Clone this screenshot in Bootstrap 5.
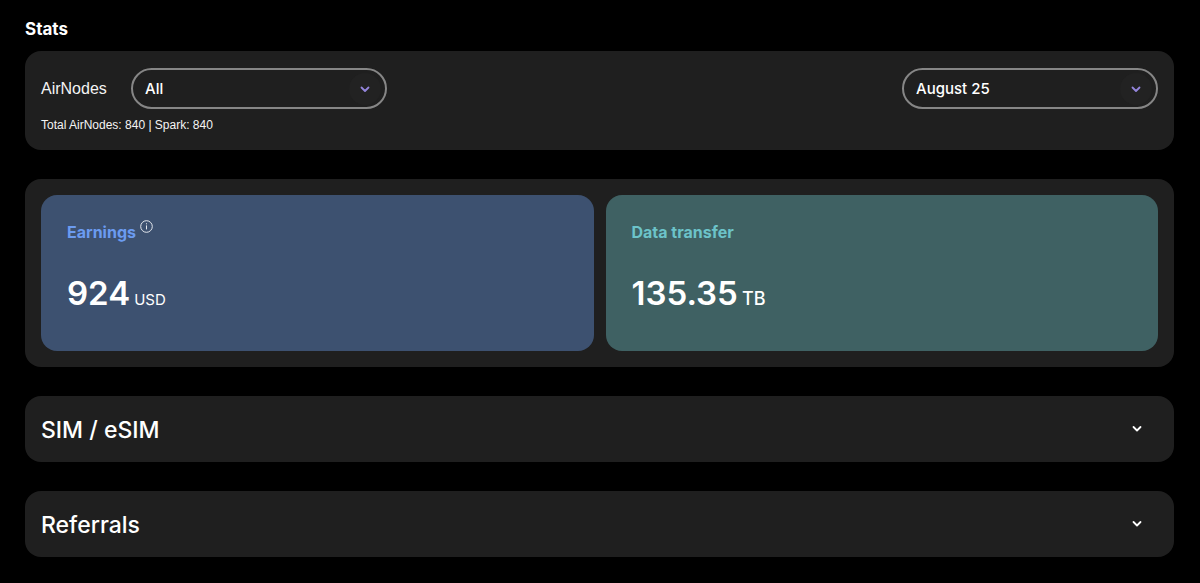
<!DOCTYPE html>
<html lang="en">
<head>
<meta charset="utf-8">
<meta name="viewport" content="width=device-width, initial-scale=1">
<title>Stats</title>
<link href="https://cdn.jsdelivr.net/npm/bootstrap@5.3.0/dist/css/bootstrap.min.css" rel="stylesheet">
<style>
  body { background: #000; color: #fff; font-family: Inter, "Liberation Sans", sans-serif; font-size: 16px; line-height: 24px; }
  .page { padding: 17px 26px 27px 25px; }
  .page-title { font-size: 17px; line-height: 24px; font-weight: 700; margin-bottom: 10px; }
  .stack { display: grid; gap: 29px; }
  .panel { background: #1f1f1f; border-radius: 16px; padding: 16px; }
  .filter-label { color: #f4f4f4; width: 90px; font-family: "Liberation Sans", Arial, sans-serif; }
  .pill-select { width: 256px; height: 41px; padding: 2px 48px 0 12px; border: 2px solid #868686; border-radius: 21px; color: #fff; font-size: 15px; font-weight: 500;
    background: #1f1f1f url("data:image/svg+xml,%3Csvg xmlns='http://www.w3.org/2000/svg' width='34' height='34'%3E%3Ccircle cx='17' cy='17' r='16' fill='%23222222'/%3E%3Cpath d='M13.5 15.5l3.5 3.5 3.5-3.5' fill='none' stroke='%239485dc' stroke-width='1.8' stroke-linecap='round' stroke-linejoin='round'/%3E%3C/svg%3E") no-repeat right 3px center / 34px 34px; }
  .filters { padding-top: 17px; }
  .totals { font-family: "Liberation Sans", Arial, sans-serif; font-size: 12px; line-height: 16px; color: #f4f4f4; margin: 8px 0 1px; }
  .tiles { display: grid; grid-template-columns: 1fr 1fr; gap: 12px; }
  .tile { border-radius: 16px; padding: 25px 26px 36px; height: 156px; }
  .tile-earn { background: #3d5170; }
  .tile-data { background: #3f6163; }
  .tile-name { font-size: 16px; line-height: 24px; font-weight: 700; }
  .tile-earn .tile-name { color: #6b9bf0; }
  .tile-data .tile-name { color: #6cc3c9; }
  .figure-value { font-size: 33px; line-height: 44px; font-weight: 600; }
  .unit-s { font-size: 15px; }
  .unit-m { font-size: 18px; font-weight: 500; }
  .fold { color: #fff; border: 0; width: 100%; padding: 16px 32px; }
  .fold-title { font-size: 23px; line-height: 32px; font-weight: 500; padding-top: 2px; }
</style>
</head>
<body>
<main class="page">
  <h1 class="page-title">Stats</h1>
  <div class="stack">
    <section class="panel filters">
      <div class="d-flex justify-content-between align-items-center">
        <div class="d-flex align-items-center">
          <label class="filter-label" for="nodes">AirNodes</label>
          <select class="form-select pill-select" id="nodes"><option>All</option></select>
        </div>
        <select class="form-select pill-select" aria-label="Month"><option>August 25</option></select>
      </div>
      <p class="totals">Total AirNodes: 840 | Spark: 840</p>
    </section>

    <section class="panel tiles">
      <div class="tile tile-earn d-flex flex-column justify-content-between">
        <div class="d-flex align-items-start">
          <h2 class="tile-name mb-0">Earnings</h2>
          <svg class="ms-1" width="13" height="13" viewBox="0 0 13 13" fill="none" stroke="#e4e8ee" role="img" aria-label="Information"><circle cx="6.5" cy="6.5" r="5.8" stroke-width="1"/><path d="M6.5 5.4v4M6.5 3.3v1" stroke-width="1"/></svg>
        </div>
        <div class="d-flex align-items-baseline gap-1"><span class="figure-value">924</span><span class="unit-s">USD</span></div>
      </div>
      <div class="tile tile-data d-flex flex-column justify-content-between">
        <h2 class="tile-name mb-0">Data transfer</h2>
        <div class="d-flex align-items-baseline gap-1"><span class="figure-value">135.35</span><span class="unit-m">TB</span></div>
      </div>
    </section>

    <button class="panel fold ps-3 d-flex justify-content-between align-items-center text-start" type="button" aria-expanded="false">
      <span class="fold-title">SIM / eSIM</span>
      <svg width="10" height="8" viewBox="0 0 10 8" fill="none" stroke="#fff" stroke-width="1.8" stroke-linecap="round" stroke-linejoin="round" aria-hidden="true"><path d="M1.5 2L5 5.5 8.5 2"/></svg>
    </button>
    <button class="panel fold ps-3 d-flex justify-content-between align-items-center text-start" type="button" aria-expanded="false">
      <span class="fold-title">Referrals</span>
      <svg width="10" height="8" viewBox="0 0 10 8" fill="none" stroke="#fff" stroke-width="1.8" stroke-linecap="round" stroke-linejoin="round" aria-hidden="true"><path d="M1.5 2L5 5.5 8.5 2"/></svg>
    </button>
  </div>
</main>
<script src="https://cdn.jsdelivr.net/npm/bootstrap@5.3.0/dist/js/bootstrap.bundle.min.js"></script>
</body>
</html>
